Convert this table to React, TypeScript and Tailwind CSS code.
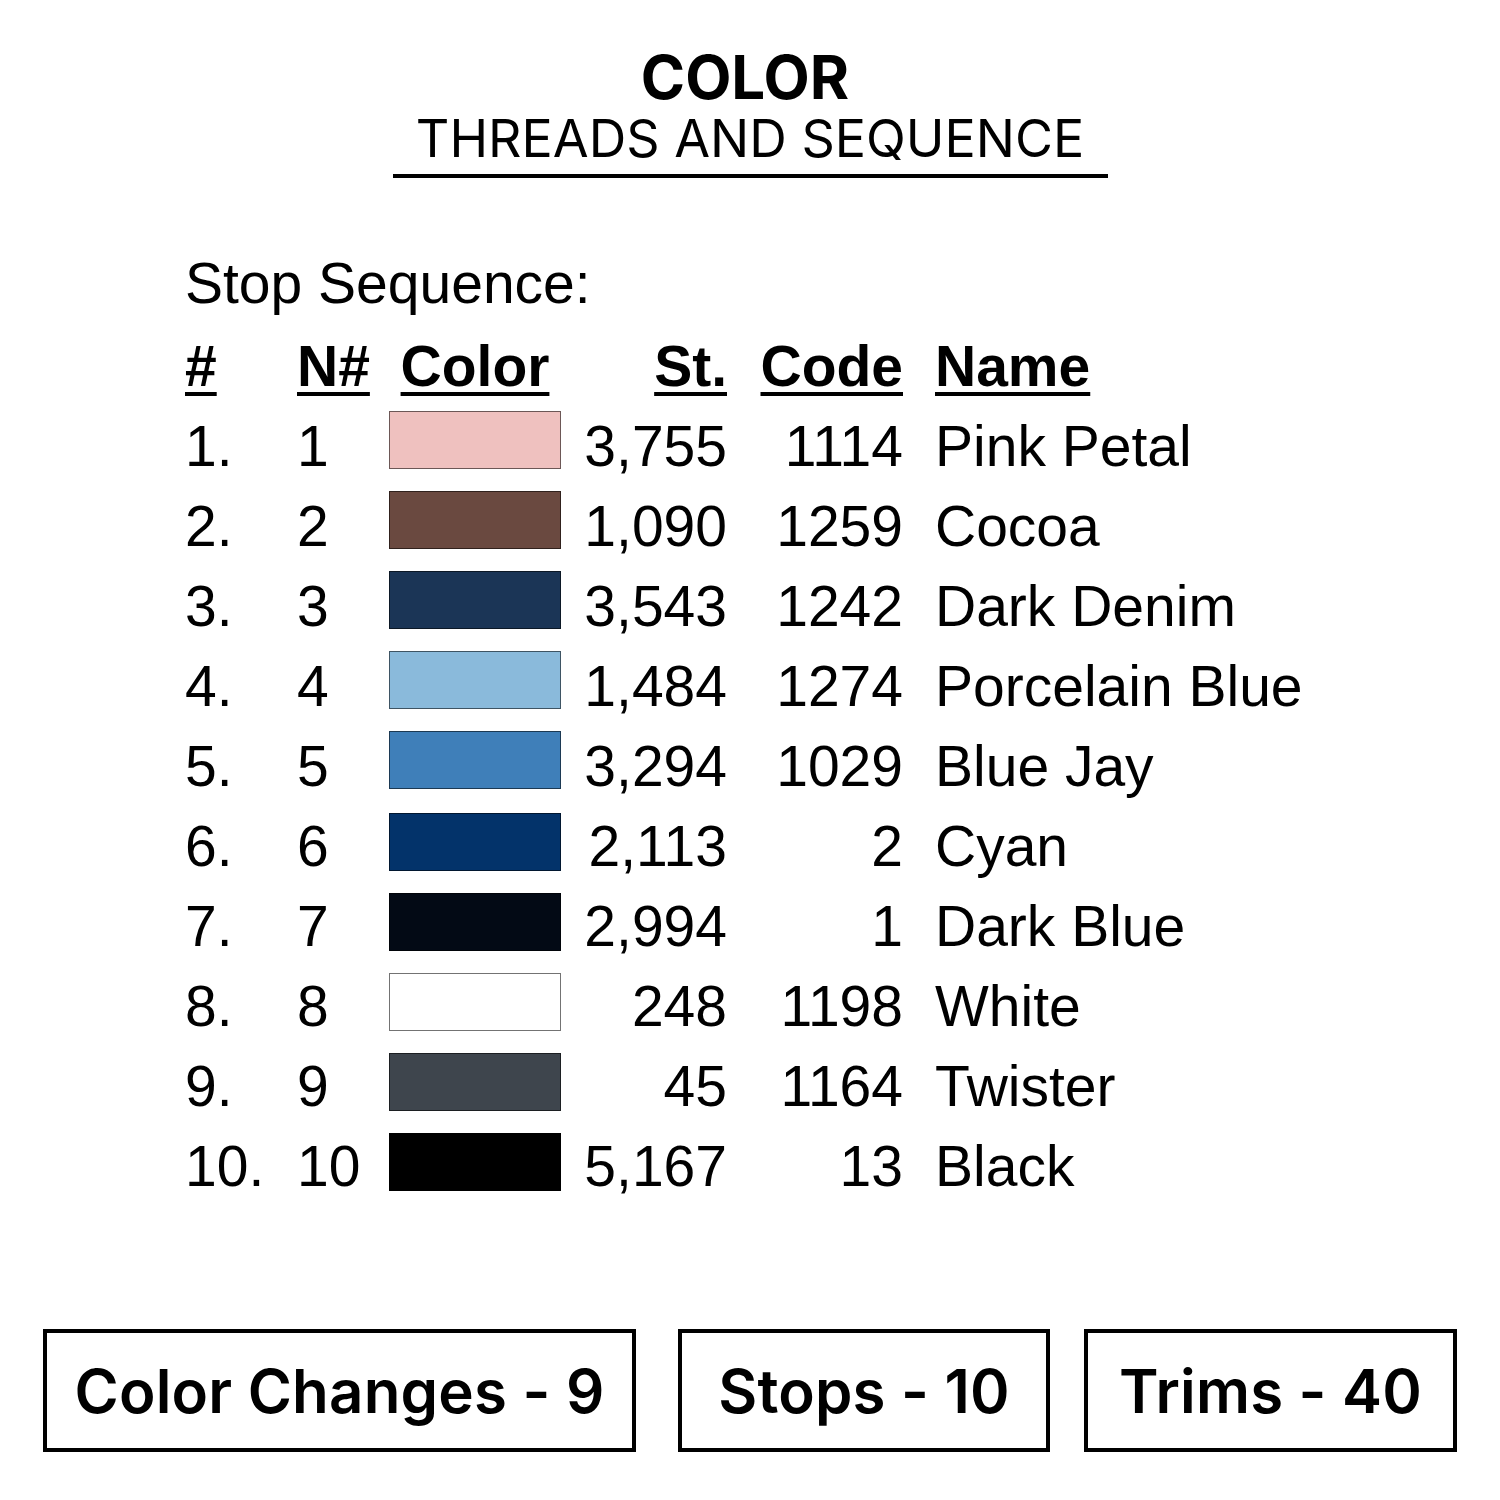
const rows = [
  { n: "1.", nn: "1", color: "#efc1bf", st: "3,755", code: "1114", name: "Pink Petal" },
  { n: "2.", nn: "2", color: "#6a4940", st: "1,090", code: "1259", name: "Cocoa" },
  { n: "3.", nn: "3", color: "#1b3556", st: "3,543", code: "1242", name: "Dark Denim" },
  { n: "4.", nn: "4", color: "#8abadb", st: "1,484", code: "1274", name: "Porcelain Blue" },
  { n: "5.", nn: "5", color: "#3f7fb9", st: "3,294", code: "1029", name: "Blue Jay" },
  { n: "6.", nn: "6", color: "#03336a", st: "2,113", code: "2", name: "Cyan" },
  { n: "7.", nn: "7", color: "#030a15", st: "2,994", code: "1", name: "Dark Blue" },
  { n: "8.", nn: "8", color: "#ffffff", st: "248", code: "1198", name: "White" },
  { n: "9.", nn: "9", color: "#3e454d", st: "45", code: "1164", name: "Twister" },
  { n: "10.", nn: "10", color: "#000000", st: "5,167", code: "13", name: "Black" },
];

const gridCols = "grid grid-cols-[112px_92px_172px_166px_176px_auto]";

export default function App() {
  return (
    <div className="w-[1500px] h-[1500px] bg-white text-black flex flex-col">
      {/* Title */}
      <div className="flex flex-col items-center pt-[47px] font-['Inter',sans-serif]">
        <h1 className="-ml-[10px] text-[60px] leading-[60px] font-bold">COLOR</h1>
        <h2 className="mt-[6px] text-[52px] leading-[52px] font-normal">
          THREADS AND SEQUENCE
        </h2>
        <div className="mt-[9px] w-[715px] h-[4px] bg-black" />
      </div>

      {/* Table */}
      <div className="ml-[185px] mt-[63px] font-['Liberation_Sans',Arial,sans-serif] text-[57px] leading-[80px]">
        <p className="pt-[2px]">Stop Sequence:</p>
        <div className={`${gridCols} mt-[3px] font-bold`}>
          <span className="underline decoration-[4px] underline-offset-[6px]">#</span>
          <span className="underline decoration-[4px] underline-offset-[6px]">N#</span>
          <span className="text-center underline decoration-[4px] underline-offset-[6px]">Color</span>
          <span className="text-right underline decoration-[4px] underline-offset-[6px]">St.</span>
          <span className="text-right underline decoration-[4px] underline-offset-[6px]">Code</span>
          <span className="pl-[32px] underline decoration-[4px] underline-offset-[6px]">Name</span>
        </div>
        {rows.map((r, i) => (
          <div key={r.n} className={`${gridCols} items-start`}>
            <span>{r.n}</span>
            <span>{r.nn}</span>
            <div
              className={`${i > 4 ? "mt-[7px]" : "mt-[5px]"} h-[58px] border border-black/55`}
              style={{ backgroundColor: r.color }}
            />
            <span className="text-right">{r.st}</span>
            <span className="text-right">{r.code}</span>
            <span className="pl-[32px] whitespace-nowrap">{r.name}</span>
          </div>
        ))}
      </div>

      {/* Summary boxes */}
      <div className="flex mt-[123px] ml-[43px] font-['Inter',sans-serif] font-semibold text-[60px] tracking-[0.2px]">
        <div className="w-[593px] h-[123px] border-[4px] border-black flex items-center justify-center">
          Color Changes - 9
        </div>
        <div className="ml-[42px] w-[372px] h-[123px] border-[4px] border-black flex items-center justify-center">
          Stops - 10
        </div>
        <div className="ml-[34px] w-[373px] h-[123px] border-[4px] border-black flex items-center justify-center">
          Trims - 40
        </div>
      </div>
    </div>
  );
}
